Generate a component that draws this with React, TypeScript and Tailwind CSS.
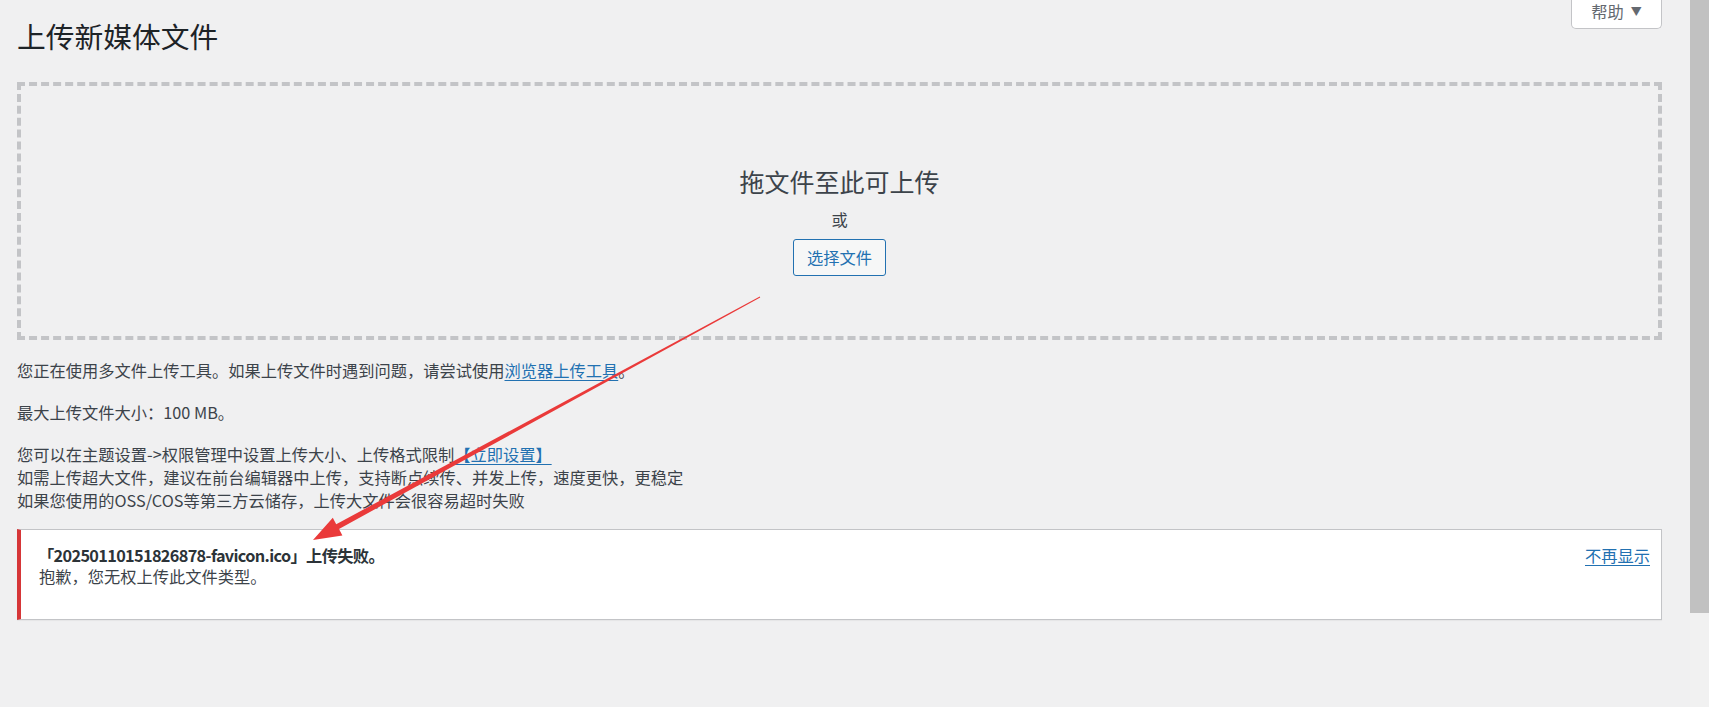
const NOTES = [
  "您可以在主题设置->权限管理中设置上传大小、上传格式限制",
  "如需上传超大文件，建议在前台编辑器中上传，支持断点续传、并发上传，速度更快，更稳定",
  "如果您使用的OSS/COS等第三方云储存，上传大文件会很容易超时失败",
];

function HelpTab() {
  return (
    <button
      type="button"
      className="flex h-[29px] w-[91px] items-center justify-center gap-[7px] rounded-b-[5px] border border-t-0 border-[#c3c4c7] bg-white pb-[5px] text-[16.25px] leading-none text-[#646970]"
    >
      <span>帮助</span>
      <span className="text-[11px]">▼</span>
    </button>
  );
}

function DropZone() {
  return (
    <div className="mt-[28px] flex h-[258px] flex-col items-center border-4 border-dashed border-[#c3c4c7]">
      <p className="mt-[79px] text-[25px] leading-[33px] text-[#3c434a]">拖文件至此可上传</p>
      <p className="mt-[9px] text-[16.25px] leading-[24px] text-[#3c434a]">或</p>
      <button
        type="button"
        className="mt-[8px] h-[37px] rounded-[3px] border border-[#2271b1] bg-[#f6f7f7] px-[13px] text-[16.25px] leading-none text-[#2271b1]"
      >
        选择文件
      </button>
    </div>
  );
}

function UploadError() {
  return (
    <div className="mt-[17px] border border-l-4 border-[#c3c4c7] border-l-[#d63638] bg-white pb-[32px] pl-[18px] pr-[11px] pt-[15px] text-[16.25px] leading-[21px] text-[#3c434a] shadow-[0_1px_1px_rgba(0,0,0,0.04)]">
      <div className="flex items-start justify-between">
        <div>
          <p className="-ml-[1px] font-semibold tracking-[-0.65px] text-[#2c3338]">
            「20250110151826878-favicon.ico」上传失败。
          </p>
          <p>抱歉，您无权上传此文件类型。</p>
        </div>
        <a href="#" className="text-[#2271b1] underline underline-offset-[3px]">
          不再显示
        </a>
      </div>
    </div>
  );
}

// red annotation arrow drawn over the page
function Arrow() {
  return (
    <svg
      className="pointer-events-none absolute left-0 top-0"
      width="1709"
      height="707"
      viewBox="0 0 1709 707"
    >
      <polygon
        fill="#ea3a3a"
        points="760.2,297.4 339,529 342.4,535.5 313,540 332.8,517.8 336.2,524.2 759.8,296.6"
      />
    </svg>
  );
}

export default function App() {
  return (
    <div className="relative flex h-[707px] w-full overflow-hidden bg-[#f0f0f1] font-['Noto_Sans_CJK_SC','Noto_Sans',sans-serif] text-[#3c434a]">
      <main className="flex-1 pl-[17px] pr-[28px]">
        <div className="flex items-start justify-between">
          <h1 className="pt-[17px] text-[28.75px] leading-[37px] text-[#1d2327]">上传新媒体文件</h1>
          <HelpTab />
        </div>

        <DropZone />

        <p className="mt-[19px] text-[16.25px] leading-[23px]">
          您正在使用多文件上传工具。如果上传文件时遇到问题，请尝试使用
          <a href="#" className="text-[#2271b1] underline underline-offset-[3px]">
            浏览器上传工具
          </a>
          。
        </p>
        <p className="mt-[19px] text-[16.25px] leading-[23px]">最大上传文件大小：100 MB。</p>
        <p className="mt-[19px] text-[16.25px] leading-[23px]">
          {NOTES[0]}
          <a href="#" className="text-[#2271b1] underline underline-offset-[3px]">
            【立即设置】
          </a>
          <br />
          {NOTES[1]}
          <br />
          {NOTES[2]}
        </p>

        <UploadError />
      </main>

      <div className="w-[19px] bg-[#f1f1f1]">
        <div className="h-[613px] w-full bg-[#c1c1c1]" />
      </div>

      <Arrow />
    </div>
  );
}
